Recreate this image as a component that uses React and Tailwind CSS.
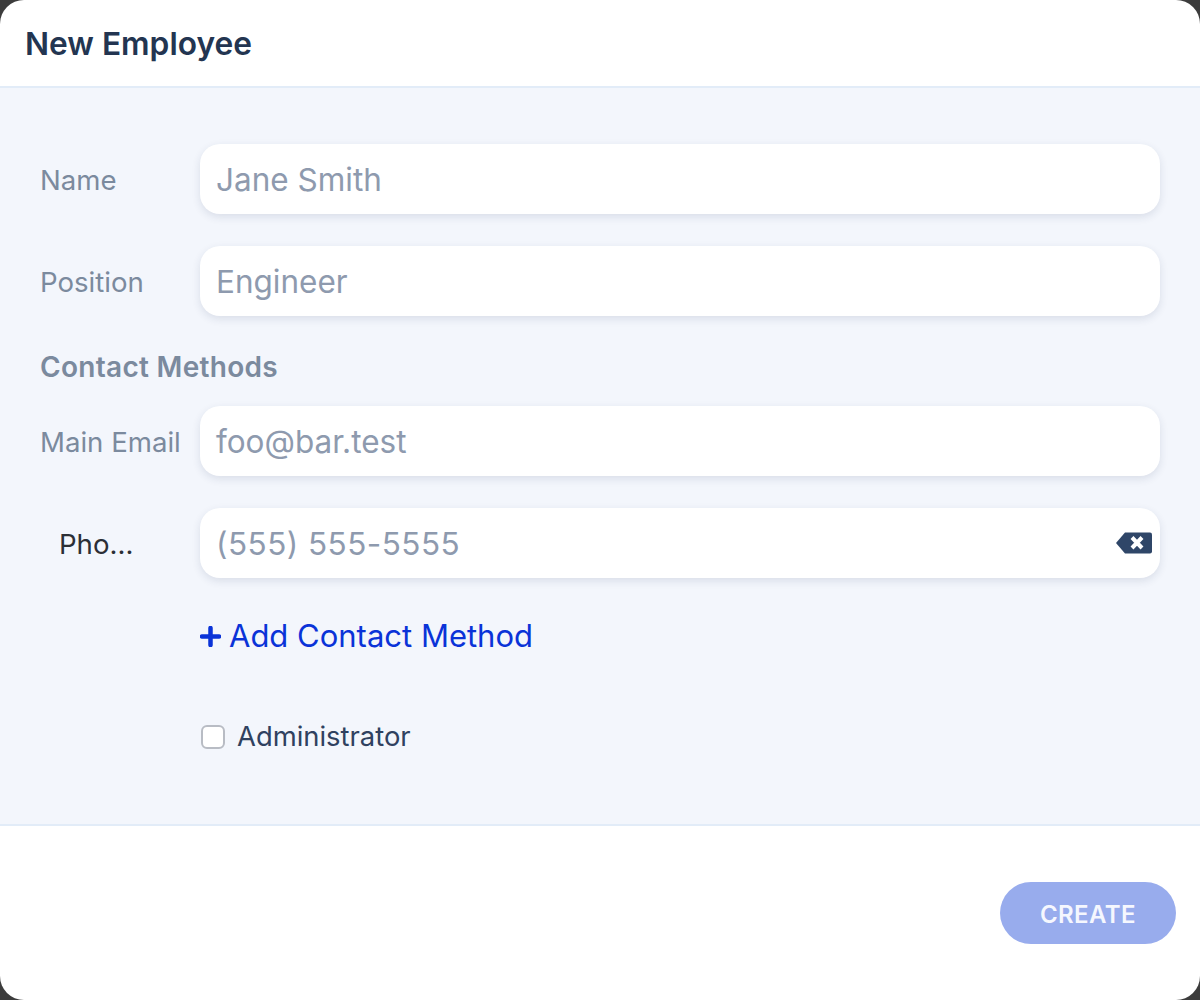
import React from "react";

function Row({ label, placeholder, labelClass = "text-[#7b8a9e]", inputClass = "", children, className = "" }) {
  return (
    <div className={`flex items-center ${className}`}>
      <div className={`w-[160px] shrink-0 pt-[3px] text-[27.6px] ${labelClass}`}>{label}</div>
      <div className="flex h-[70px] w-[960px] items-center justify-between rounded-[20px] bg-white pl-[16px] pr-[8px] text-[31.5px] text-[#8e9aae] shadow-[0_3px_8px_rgba(30,50,90,0.12)]">
        <span className={`pt-[2px] ${inputClass}`}>{placeholder}</span>
        {children}
      </div>
    </div>
  );
}

export default function App() {
  return (
    <div className="h-[1000px] w-[1200px] overflow-hidden bg-[#3c3c3c] font-['Inter',sans-serif]">
      <div className="flex h-full flex-col overflow-hidden rounded-[24px] bg-white">
        <div className="flex h-[88px] shrink-0 items-center border-b-2 border-[#e2ecf8] pl-[25px] pt-[2px] text-[31.7px] font-semibold text-[#233551]">
          New Employee
        </div>
        <div className="flex h-[738px] shrink-0 flex-col border-b-2 border-[#e2ecf8] bg-[#f3f6fc] pl-[40px] pt-[56px]">
          <Row label="Name" placeholder="Jane Smith" />
          <Row label="Position" placeholder="Engineer" className="mt-[32px]" />
          <div className="mt-[35px] h-[33px] text-[28px] font-semibold leading-[32px] tracking-[0.3px] text-[#7b8a9e]">Contact Methods</div>
          <Row label="Main Email" placeholder="foo@bar.test" className="mt-[22px]" />
          <Row
            label="Pho..."
            placeholder="(555) 555-5555"
            labelClass="pl-[19px] text-[#2b2f36]"
            inputClass="tracking-[0.45px]"
            className="mt-[32px]"
          >
            <svg width="36" height="22" viewBox="0 0 36 22" aria-hidden="true">
              <path d="M9 0.5H34a2 2 0 0 1 2 2V19.5a2 2 0 0 1-2 2H9L0 11Z" fill="#2f4668" />
              <path d="M16 5.5l10 10.5M26 5.5L16 16" stroke="#fff" strokeWidth="4" fill="none" />
            </svg>
          </Row>
          <div className="mt-[38px] ml-[160px] flex h-[40px] items-center text-[31px] text-[#0a33d8]">
            <svg width="21" height="21" viewBox="0 0 21 21" className="mr-[8px]" aria-hidden="true">
              <path d="M10.5 2v17M2 10.5h17" stroke="#0a33d8" strokeWidth="4.5" strokeLinecap="round" fill="none" />
            </svg>
            Add Contact Method
          </div>
          <div className="mt-[63px] ml-[161px] flex h-[36px] items-center text-[27.4px] text-[#2f4160]">
            <span className="mr-[12px] h-[24px] w-[24px] rounded-[6px] border-2 border-[#b8bcc4] bg-white" />
            Administrator
          </div>
        </div>
        <div className="flex flex-1 justify-end pr-[24px] pt-[56px]">
          <button className="h-[62px] w-[176px] rounded-full bg-[#98aced] pt-[3px] text-[24px] font-semibold tracking-[0.4px] text-[#f5f7fe]">
            CREATE
          </button>
        </div>
      </div>
    </div>
  );
}
